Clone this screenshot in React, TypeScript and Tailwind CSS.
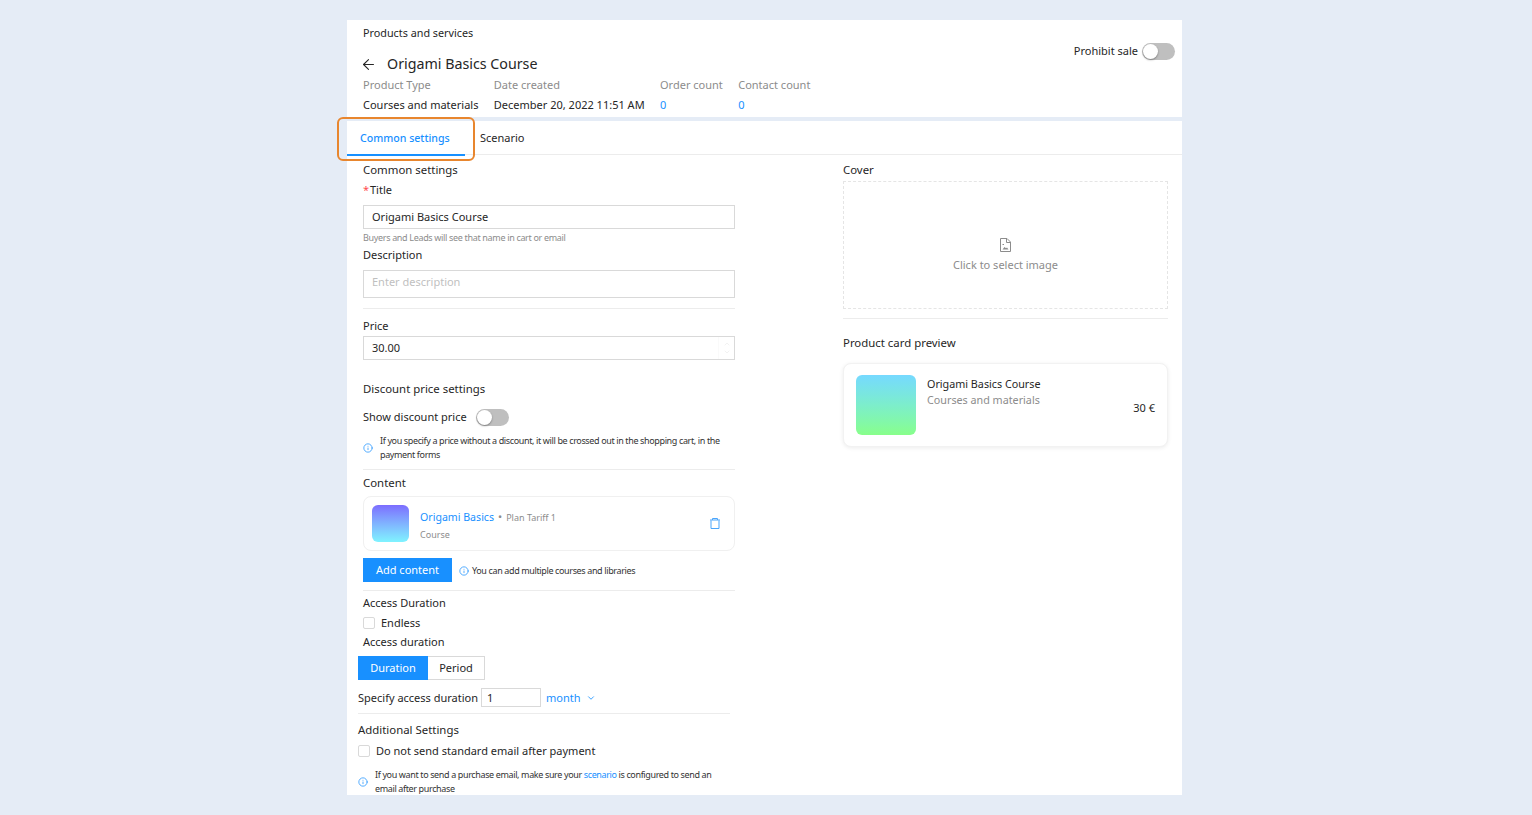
import React from "react";
import { ArrowLeft, ChevronDown, ChevronUp, Info } from "lucide-react";

function Toggle() {
  return (
    <span className="relative block h-[17px] w-[33px] rounded-full bg-[#bfbfbf]">
      <span className="absolute left-[1px] top-[1px] h-[15px] w-[15px] rounded-full bg-white shadow-[0_1px_2px_rgba(0,0,0,0.35)]" />
    </span>
  );
}

function Check() {
  return <span className="block h-3 w-3 rounded-[2px] border border-[#d9d9d9] bg-white" />;
}

function Rule({ className }: { className: string }) {
  return <div className={`h-px bg-[#ececec] ${className}`} />;
}

function Note({ children, className }: { children: React.ReactNode; className: string }) {
  return (
    <div className={`flex items-center text-[9px] leading-[14px] tracking-[-0.37px] text-[#333] ${className}`}>
      <Info className="h-[10px] w-[10px] shrink-0 text-[#1890ff]" strokeWidth={1.75} />
      <p>{children}</p>
    </div>
  );
}

function Trash() {
  return (
    <svg viewBox="0 0 10 11" className="h-[11px] w-[10px]" fill="none" stroke="#4aa5fb" strokeWidth="1">
      <path d="M1 2.5v8h8v-8" />
      <path d="M0 2h10M2.5 2V.5h5V2" />
    </svg>
  );
}

function FileImage() {
  return (
    <svg viewBox="0 0 11 14" className="h-[14px] w-[11px]" fill="none" stroke="#8c8c8c" strokeWidth="1">
      <path d="M.5.5h6.5L10.5 4v9.5H.5z" />
      <path d="M6.5.5V4.5h4" />
      <path d="M2.5 11.5l2-2.5 1.5 1.2 1-.8 1.5 2.1z" fill="#8c8c8c" stroke="none" />
      <path d="M2.5 6.5h1.5" />
    </svg>
  );
}

export default function App() {
  return (
    <div className="h-[815px] overflow-hidden bg-[#e5ecf6] pl-[347px] pr-[350px] pt-5 font-['Noto_Sans',sans-serif] text-[11px] text-[#262626]">
      <div className="relative h-[775px] overflow-hidden">
        {/* header */}
        <header className="relative h-[97px] bg-white pl-4 pt-[6px]">
          <div className="text-[10.8px] leading-[14px]">Products and services</div>
          <div className="mt-[14px] flex h-5 items-center">
            <ArrowLeft className="-ml-[3px] h-[17px] w-[17px] text-[#262626]" strokeWidth={1.5} />
            <span className="ml-[10px] text-[14.25px] leading-5">Origami Basics Course</span>
          </div>
          <div className="mt-[1px] flex gap-[15.4px] leading-[20px]">
            <div>
              <div className="text-[#8c8c8c]">Product Type</div>
              <div>Courses and materials</div>
            </div>
            <div>
              <div className="text-[#8c8c8c]">Date created</div>
              <div>December 20, 2022 11:51 AM</div>
            </div>
            <div>
              <div className="text-[#8c8c8c]">Order count</div>
              <div className="text-[#1890ff]">0</div>
            </div>
            <div>
              <div className="text-[#8c8c8c]">Contact count</div>
              <div className="text-[#1890ff]">0</div>
            </div>
          </div>
          <div className="absolute right-[7px] top-[23px] flex items-center gap-1">
            <span>Prohibit sale</span>
            <Toggle />
          </div>
        </header>

        <main className="mt-1 h-[674px] bg-white">
          {/* tabs */}
          <div className="flex h-[34px] border-b border-[#ececec]">
            <div className="h-[35px] w-[118px] border-b-2 border-[#1890ff] pl-[13px] pt-[9px] text-[10.6px] font-medium leading-4 text-[#1890ff]">Common settings</div>
            <div className="ml-[15px] pt-[9px] leading-4">Scenario</div>
          </div>

          <div className="flex">
            {/* left column */}
            <section className="ml-4 w-[372px] shrink-0">
              <div className="mt-[5px] h-5 text-[11.4px] leading-5">Common settings</div>
              <div className="flex h-5 items-center"><span className="w-[7px] text-[#ff4d4f]">*</span>Title</div>
              <div className="mt-[5px] flex h-6 items-center border border-[#d9d9d9] pl-2">Origami Basics Course</div>
              <div className="mt-[2px] h-[14px] text-[9px] leading-[14px] tracking-[-0.33px] text-[#8c8c8c]">Buyers and Leads will see that name in cart or email</div>
              <div className="h-5 leading-5">Description</div>
              <div className="mt-[5px] h-7 border border-[#d9d9d9] pl-2 leading-[22px] text-[#bfbfbf]">Enter description</div>
              <Rule className="mt-[10px]" />
              <div className="mt-[7px] h-5 leading-5">Price</div>
              <div className="relative flex h-6 items-center border border-[#d9d9d9] pl-2">
                30.00
                <span className="absolute bottom-0 right-0 top-0 flex w-4 flex-col items-center justify-center border-l border-[#fafafa] text-[#ececec]">
                  <ChevronUp className="h-2 w-2" />
                  <ChevronDown className="h-2 w-2" />
                </span>
              </div>
              <div className="mt-[19px] h-5 text-[11.4px] leading-5">Discount price settings</div>
              <div className="mt-2 flex h-5 items-center gap-[9px]">
                <span>Show discount price</span>
                <Toggle />
              </div>
              <div className="mt-[7px]">
                <Note className="gap-[7px]">If you specify a price without a discount, it will be crossed out in the shopping cart, in the payment forms</Note>
              </div>
              <Rule className="mt-[7px]" />
              <div className="mt-[3px] h-5 text-[11.4px] leading-5">Content</div>
              <div className="mt-[3px] flex h-[55px] items-center rounded-lg border border-[#f0f0f0] pl-2 pr-[14px]">
                <div className="h-[37px] w-[37px] rounded-md bg-gradient-to-b from-[#7c6cff] to-[#7ff3ff]" />
                <div className="ml-[11px] flex-1 pt-[3px]">
                  <div className="flex items-center gap-1 leading-4">
                    <span className="text-[10.6px] text-[#1890ff]">Origami Basics</span>
                    <span className="text-[#8c8c8c]">•</span>
                    <span className="pt-[3px] text-[9px] text-[#8c8c8c]">Plan Tariff 1</span>
                  </div>
                  <div className="mt-[1px] text-[9px] leading-4 text-[#8c8c8c]">Course</div>
                </div>
                <Trash />
              </div>
              <div className="mt-[7px] flex items-center gap-[7px]">
                <div className="flex h-6 w-[89px] items-center justify-center bg-[#1890ff] text-white">Add content</div>
                <Note className="gap-[3px] pt-[1px]">You can add multiple courses and libraries</Note>
              </div>
              <Rule className="mt-2" />
              <div className="mt-[2px] h-5 leading-5">Access Duration</div>
              <div className="flex h-5 items-center gap-[6px]"><Check /><span>Endless</span></div>
              <div className="h-[18px] leading-[18px]">Access duration</div>
            </section>

            {/* right column */}
            <aside className="ml-[108px] w-[325px] shrink-0">
              <div className="mt-[5px] h-5 text-[11.4px] leading-5">Cover</div>
              <div className="mt-[1px] flex h-[128px] flex-col items-center gap-[5px] border border-dashed border-[#e5e5e5] pt-[56px] text-[#8c8c8c]">
                <FileImage />
                <span className="leading-4">Click to select image</span>
              </div>
              <Rule className="mt-[9px]" />
              <div className="mt-[14px] h-5 text-[11.4px] leading-5">Product card preview</div>
              <div className="mt-[10px] flex h-[84px] items-start rounded-lg border border-[#f2f2f2] bg-white pl-3 pr-3 pt-[11px] shadow-[0_1px_4px_rgba(0,0,0,0.08)]">
                <div className="h-[60px] w-[60px] rounded-md bg-gradient-to-b from-[#76d9ff] to-[#88ff8a]" />
                <div className="ml-[11px] flex-1 pt-[1px] text-[10.75px] leading-4">
                  <div>Origami Basics Course</div>
                  <div className="text-[#8c8c8c]">Courses and materials</div>
                </div>
                <div className="pt-[25px] leading-4">30 €</div>
              </div>
            </aside>
          </div>

          {/* lower left, shifted 5px */}
          <section className="ml-[11px] w-[372px]">
            <div className="mt-[5px] flex h-6 w-[127px]">
              <div className="flex w-[70px] items-center justify-center bg-[#1890ff] text-white">Duration</div>
              <div className="flex flex-1 items-center justify-center border border-l-0 border-[#d9d9d9]">Period</div>
            </div>
            <div className="mt-2 flex h-[19px] items-center gap-[3px]">
              <span className="pt-[1px]">Specify access duration</span>
              <div className="flex h-[19px] w-[60px] items-center border border-[#d9d9d9] pl-[5px] pt-[1px]">1</div>
              <span className="ml-[2px] pt-[1px] text-[#1890ff]">month</span>
              <ChevronDown className="ml-[2px] h-[10px] w-[10px] text-[#1890ff]" />
            </div>
            <Rule className="mt-[6px]" />
            <div className="mt-[6px] h-5 text-[11.4px] leading-5">Additional Settings</div>
            <div className="mt-[1px] flex h-5 items-center gap-[6px]"><Check /><span>Do not send standard email after payment</span></div>
            <div className="mt-[7px] w-[372px]">
              <Note className="gap-[7px]">If you want to send a purchase email, make sure your <span className="text-[#1890ff]">scenario</span> is configured to send an email after purchase</Note>
            </div>
          </section>
        </main>
      </div>
      {/* highlight */}
      <div className="absolute left-[337px] top-[117px] h-[44px] w-[138px] rounded-[6px] border-2 border-[#e8862e]" />
    </div>
  );
}
